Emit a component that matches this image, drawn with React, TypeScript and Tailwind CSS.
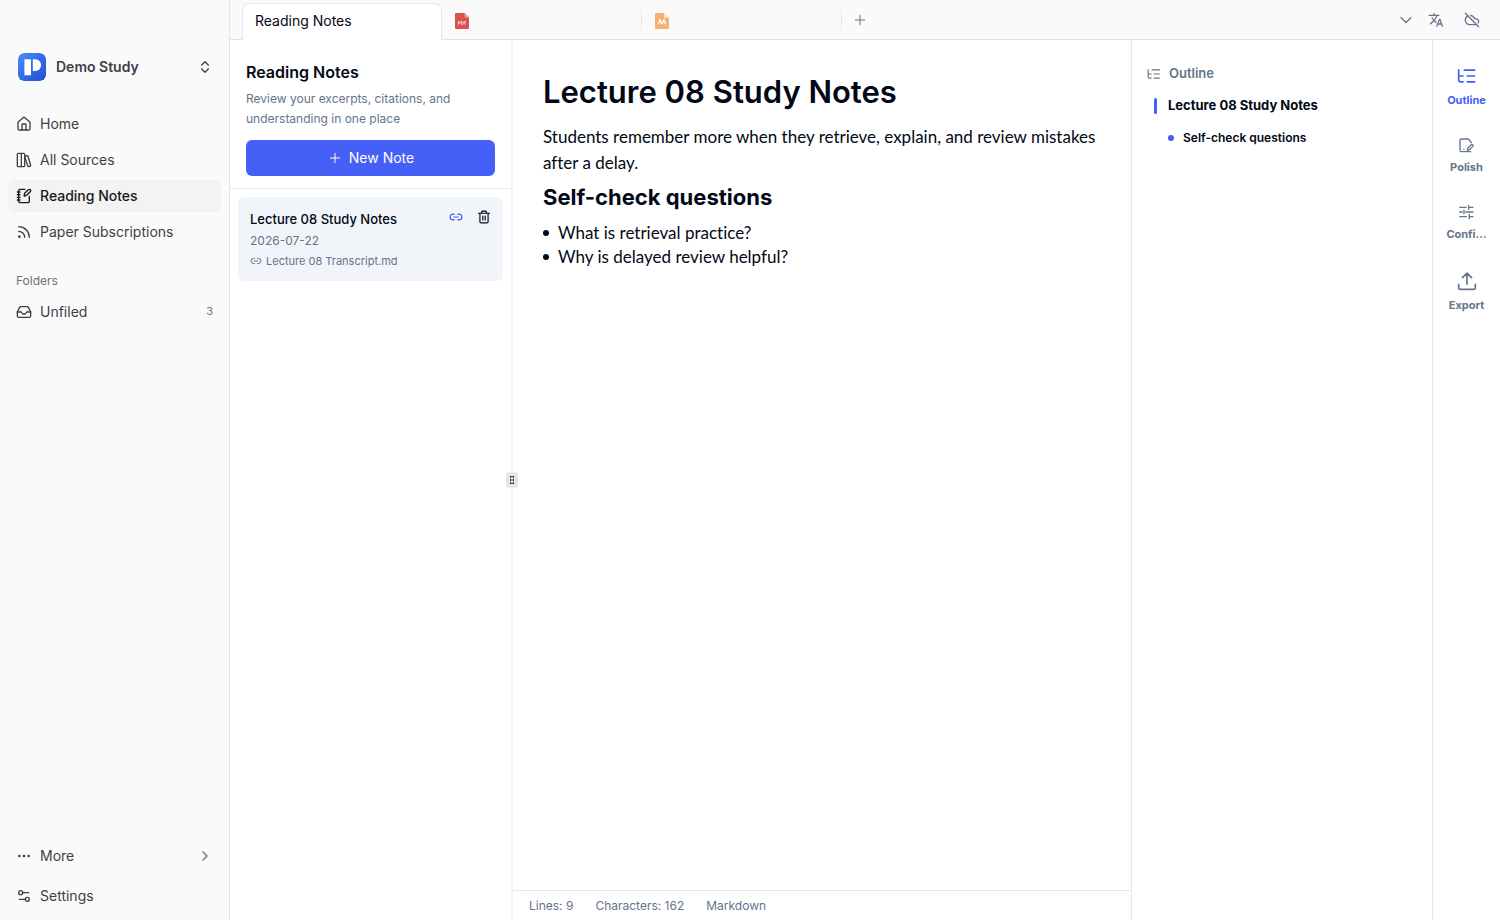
import type { ReactNode, SVGProps } from "react";
import {
  ChevronDown,
  ChevronRight,
  ChevronsUpDown,
  CloudOff,
  Ellipsis,
  House,
  Inbox,
  Link2,
  NotebookPen,
  Plus,
  Rss,
  Settings2,
} from "lucide-react";
import { MdTranslate } from "react-icons/md";

type IconProps = SVGProps<SVGSVGElement>;

function StrokeIcon({ children, ...props }: IconProps & { children: ReactNode }) {
  return (
    <svg
      viewBox="0 0 24 24"
      fill="none"
      stroke="currentColor"
      strokeWidth={2}
      strokeLinecap="round"
      strokeLinejoin="round"
      aria-hidden="true"
      {...props}
    >
      {children}
    </svg>
  );
}

function Logo() {
  return (
    <svg viewBox="0 0 28 28" className="size-7 shrink-0 rounded-md" aria-hidden="true">
      <defs>
        <linearGradient id="logo-fill" x1="0" y1="0" x2="1" y2="1">
          <stop offset="0" stopColor="#4b8bfb" />
          <stop offset="1" stopColor="#1d4fd3" />
        </linearGradient>
      </defs>
      <rect width="28" height="28" rx="6" fill="url(#logo-fill)" />
      <path d="M6.4 6.2H13v16H6.4z" fill="#fff" />
      <path d="M14.8 6.2h2.600a5.700 5.900 0 0 1 0 11.800h-2.600z" fill="#fff" />
    </svg>
  );
}

function BooksIcon(props: IconProps) {
  return (
    <StrokeIcon {...props}>
      <rect x="2" y="2" width="6" height="20" rx="1.5" />
      <path d="M8 2h3.500a1.500 1.500 0 0 1 1.500 1.500v17a1.500 1.500 0 0 1-1.500 1.500H8" />
      <path d="m13.200 6.400 3.300-.9a1.300 1.300 0 0 1 1.600.9l3.800 13.400a1.300 1.300 0 0 1-.9 1.600l-1.800.5a1.300 1.300 0 0 1-1.600-.9L13.200 7" />
    </StrokeIcon>
  );
}

function TreeIcon(props: IconProps) {
  return (
    <StrokeIcon strokeLinecap="butt" {...props}>
      <path d="M8 5H22M11.500 12H22M11.500 19H22M2 4v12.500a2.500 2.500 0 0 0 2.500 2.500H8M2 10a2.200 2.200 0 0 0 2.200 2H8" />
    </StrokeIcon>
  );
}

function PolishIcon(props: IconProps) {
  return (
    <StrokeIcon {...props}>
      <path d="M20 8.500 15.500 3H5a2 2 0 0 0-2 2v15a2 2 0 0 0 2 2h14" />
      <path d="m19.800 11.700a1.700 1.700 0 0 1 2.400 2.400l-5 5-3.200 1 .8-3.400z" />
      <path d="M8.500 18.500h.1" />
    </StrokeIcon>
  );
}

function TuneIcon(props: IconProps) {
  return (
    <StrokeIcon strokeLinecap="butt" {...props}>
      <path d="M2 5h11M16 5h7M16 1.500v7M2 12h5M11 12h12M9 8.500v7M2 19h11M17 19h6M17 15.500v7" />
    </StrokeIcon>
  );
}

function ExportIcon(props: IconProps) {
  return (
    <StrokeIcon {...props}>
      <path d="M12 16V2.500M6.500 8 12 2.500 17.500 8M2 16v4.500a1.500 1.500 0 0 0 1.500 1.500h17a1.500 1.500 0 0 0 1.500-1.500V16" />
    </StrokeIcon>
  );
}

function TrashIcon(props: IconProps) {
  return (
    <StrokeIcon {...props}>
      <path d="M2.500 5.500h19M8 5V3.500A1.500 1.500 0 0 1 9.500 2h5A1.500 1.500 0 0 1 16 3.500V5M5 6v14a2 2 0 0 0 2 2h10a2 2 0 0 0 2-2V6M10 10.500v6.500M14 10.500v6.500" />
    </StrokeIcon>
  );
}

function PdfFile() {
  return (
    <svg viewBox="0 0 14 16" className="h-4 w-3.5" aria-hidden="true">
      <path d="M1.200 0H9.500L14 4.500v10.300A1.200 1.200 0 0 1 12.800 16H1.200A1.200 1.200 0 0 1 0 14.800V1.200A1.200 1.200 0 0 1 1.200 0Z" fill="#d9534f" />
      <path d="M9.500 0 14 4.500h-3.500a1 1 0 0 1-1-1Z" fill="#eba19f" />
      <path d="M3.500 11.500v-3h1a.9.9 0 0 1 0 1.800h-1M6.300 8.500v3h.6a1.500 1.500 0 0 0 0-3ZM9.300 11.500v-3h1.700M9.300 10h1.400" fill="none" stroke="#fff" strokeWidth=".65" />
    </svg>
  );
}

function MarkdownFile() {
  return (
    <svg viewBox="0 0 14 16" className="h-4 w-3.5" aria-hidden="true">
      <path d="M.8 0H9l5 5v10.200a.8.8 0 0 1-.8.800H.8a.8.8 0 0 1-.8-.8V.8A.8.8 0 0 1 .8 0Z" fill="#f6b073" />
      <path d="M9 0l5 5H9.800a.8.8 0 0 1-.8-.8Z" fill="#fde3ca" />
      <path d="M3.300 11.200 5 7l2 3.600L9 7l1.700 4.200" fill="none" stroke="#fff" strokeWidth="1.300" />
    </svg>
  );
}

const navItems = [
  { label: "Home", icon: House, active: false },
  { label: "All Sources", icon: BooksIcon, active: false },
  { label: "Reading Notes", icon: NotebookPen, active: true },
  { label: "Paper Subscriptions", icon: Rss, active: false },
];

function Sidebar() {
  return (
    <aside className="flex w-[230px] shrink-0 flex-col border-r border-[#e2e4e8] bg-[#fafafa] px-2 text-sm text-[#3f3f46]">
      <button type="button" className="mt-12 flex h-[37px] items-center gap-2.5 pr-2 pl-2.5 text-left">
        <Logo />
        <span className="flex-1 font-semibold">Demo Study</span>
        <ChevronsUpDown className="size-4" />
      </button>
      <nav className="mt-[23px] flex flex-col gap-1">
        {navItems.map(({ label, icon: Icon, active }) => (
          <a
            key={label}
            href="#"
            className={
              active
                ? "flex h-8 items-center gap-2 rounded-md bg-[#f3f3f4] px-2 font-medium text-[#18181b]"
                : "flex h-8 items-center gap-2 rounded-md px-2"
            }
          >
            <Icon className="size-4" />
            {label}
          </a>
        ))}
      </nav>
      <h2 className="mt-[18px] flex h-[30px] items-center px-2 text-xs text-[#71717a]">Folders</h2>
      <a href="#" className="flex h-8 items-center gap-2 px-2">
        <Inbox className="size-4" />
        <span className="flex-1">Unfiled</span>
        <span className="text-[11px] text-[#64748b]">3</span>
      </a>
      <div className="mt-auto mb-2 flex flex-col gap-2">
        <button type="button" className="flex h-8 items-center gap-2 px-2 text-left">
          <Ellipsis className="size-4" />
          <span className="flex-1">More</span>
          <ChevronRight className="size-4 text-[#64748b]" />
        </button>
        <a href="#" className="flex h-8 items-center gap-2 px-2">
          <Settings2 className="size-4" />
          Settings
        </a>
      </div>
    </aside>
  );
}

function TabBar() {
  return (
    <header className="flex h-10 shrink-0 items-end bg-[#fafafa] text-[#64748b]">
      <div className="h-full w-3 border-b border-[#e2e4e8]" />
      <button
        type="button"
        className="h-[37px] w-[200px] rounded-t-lg border border-b-0 border-[#e2e8f0] bg-white px-3 pb-0.5 text-left text-sm text-[#020817]"
      >
        Reading Notes
      </button>
      <div className="flex h-full flex-1 items-center border-b border-[#e2e4e8]">
        <button type="button" aria-label="PDF document" className="flex h-5 w-[200px] items-end border-r border-[#e2e8f0] px-[13px] pb-px">
          <PdfFile />
        </button>
        <button type="button" aria-label="Markdown document" className="flex h-5 w-[200px] items-end border-r border-[#e2e8f0] px-[13px] pb-px">
          <MarkdownFile />
        </button>
        <button type="button" aria-label="New tab" className="ml-2.5">
          <Plus className="size-4" strokeWidth={1.5} />
        </button>
        <div className="ml-auto flex items-center gap-5 pr-5">
          <button type="button" aria-label="Show tabs">
            <ChevronDown className="size-5" strokeWidth={1.500} />
          </button>
          <button type="button" aria-label="Translate" className="-ml-2">
            <MdTranslate className="size-4" />
          </button>
          <button type="button" aria-label="Offline">
            <CloudOff className="size-4" />
          </button>
        </div>
      </div>
    </header>
  );
}

function NotesPanel() {
  return (
    <section className="flex w-[281px] shrink-0 flex-col">
      <div className="border-b border-[#e8ebf0] px-4 pt-5 pb-3">
        <h1 className="text-base font-semibold text-[#020817]">Reading Notes</h1>
        <p className="mt-[5px] text-xs leading-5 text-[#64748b]">
          Review your excerpts, citations, and understanding in one place
        </p>
        <button
          type="button"
          className="mt-[11px] flex h-9 w-full items-center justify-center gap-1.5 rounded-md bg-[#465ff7] text-sm text-white"
        >
          <Plus className="size-4" strokeWidth={1.500} />
          New Note
        </button>
      </div>
      <article className="mx-2 mt-2 rounded-md bg-[#f1f5fa] px-3 pt-3 pb-3">
        <div className="flex h-5 items-start gap-3.5">
          <h2 className="flex-1 text-[13px] leading-5 font-medium text-[#020817]">Lecture 08 Study Notes</h2>
          <button type="button" aria-label="Linked source" className="pt-px text-[#465ff7]">
            <Link2 className="size-3.5" />
          </button>
          <button type="button" aria-label="Delete note" className="pt-px text-[#020817]">
            <TrashIcon className="size-3.5" />
          </button>
        </div>
        <p className="text-xs leading-6 text-[#64748b]">2026-07-22</p>
        <a href="#" className="flex items-center gap-1 text-[11px] leading-4 text-[#64748b]">
          <Link2 className="size-3" />
          Lecture 08 Transcript.md
        </a>
      </article>
    </section>
  );
}

function Editor() {
  return (
    <main className="flex min-w-0 flex-1 flex-col">
      <article className="flex-1 px-[30px] pt-8 text-[#020817]">
        <h1 className="text-[31px] leading-10 font-semibold">Lecture 08 Study Notes</h1>
        <p className="mt-3 font-['Lato',sans-serif] text-[17px] leading-[26px] [font-variant-ligatures:none]">
          Students remember more when they retrieve, explain, and review mistakes after a delay.
        </p>
        <h2 className="mt-[7px] text-[22px] leading-7 font-bold">Self-check questions</h2>
        <ul className="mt-2.5 font-['Lato',sans-serif] text-[17px] leading-6 [font-variant-ligatures:none]">
          {["What is retrieval practice?", "Why is delayed review helpful?"].map((text) => (
            <li key={text} className="flex items-center gap-[9px]">
              <span className="size-1.5 rounded-full bg-[#020817]" />
              {text}
            </li>
          ))}
        </ul>
      </article>
      <footer className="flex h-[30px] items-center gap-[22px] border-t border-[#e2e8f0] px-4 text-xs text-[#64748b]">
        <span>Lines: 9</span>
        <span>Characters: 162</span>
        <span>Markdown</span>
      </footer>
    </main>
  );
}

function OutlinePanel() {
  return (
    <aside className="flex w-[301px] shrink-0 flex-col border-l border-[#e2e8f0] px-[15px] pt-[18px] text-[#020817]">
      <h2 className="flex h-8 items-center gap-2 text-[13px] font-semibold text-[#64748b]">
        <TreeIcon className="size-3.5" />
        Outline
      </h2>
      <a href="#" className="flex h-8 items-center gap-[11px] pl-[7px] text-[13px] font-bold">
        <span className="h-4 w-[3px] rounded-sm bg-[#465ff7]" />
        Lecture 08 Study Notes
      </a>
      <a href="#" className="flex h-8 items-center gap-[9px] pl-[21px] text-xs font-semibold">
        <span className="size-1.5 rounded-full bg-[#465fe0]" />
        Self-check questions
      </a>
    </aside>
  );
}

const tools = [
  { label: "Outline", icon: TreeIcon, size: "size-5", color: "text-[#465ff7]" },
  { label: "Polish", icon: PolishIcon, size: "size-4", color: "text-[#64748b]" },
  { label: "Confi...", icon: TuneIcon, size: "size-4", color: "text-[#64748b]" },
  { label: "Export", icon: ExportIcon, size: "size-5", color: "text-[#64748b]" },
];

function ToolRail() {
  return (
    <aside className="flex w-[68px] shrink-0 flex-col items-center gap-[29px] border-l border-[#e2e8f0] pt-[26px]">
      {tools.map(({ label, icon: Icon, size, color }) => (
        <button key={label} type="button" className={`flex flex-col items-center gap-1.5 ${color}`}>
          <Icon className={size} strokeWidth={2} />
          <span className="text-[11px] leading-4 font-bold">{label}</span>
        </button>
      ))}
    </aside>
  );
}

function GripHandle() {
  return (
    <div className="relative w-0.5 shrink-0 bg-[#f1f5f9]">
      <button
        type="button"
        aria-label="Resize panel"
        className="absolute top-1/2 left-1/2 grid h-4 w-3 -translate-x-1/2 -translate-y-1/2 place-items-center rounded-sm bg-[#e2e8f0]"
      >
        <svg viewBox="0 0 4 8" className="h-2 w-1" fill="#020817" aria-hidden="true">
          <path d="M0 0h1.500v1.500H0zM2.500 0H4v1.500H2.500zM0 3.200h1.500v1.500H0zM2.500 3.200H4v1.500H2.500zM0 6.400h1.500v1.500H0zM2.500 6.400H4v1.500H2.500z" />
        </svg>
      </button>
    </div>
  );
}

export default function App() {
  return (
    <div className="flex h-screen bg-white font-['Inter',sans-serif]">
      <Sidebar />
      <div className="flex min-w-0 flex-1 flex-col">
        <TabBar />
        <div className="flex min-h-0 flex-1">
          <NotesPanel />
          <GripHandle />
          <Editor />
          <OutlinePanel />
          <ToolRail />
        </div>
      </div>
    </div>
  );
}
